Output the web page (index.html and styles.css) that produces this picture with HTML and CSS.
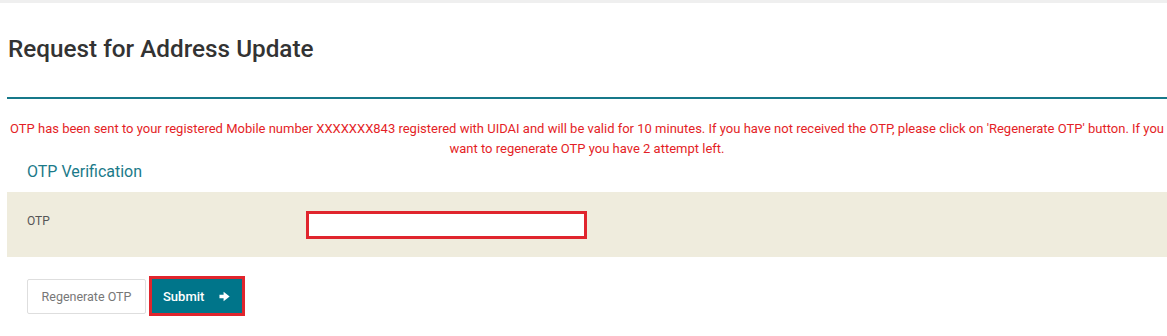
FILE: index.html
```html
<!DOCTYPE html>
<html lang="en">
<head>
    <meta charset="UTF-8">
    <meta name="viewport" content="width=device-width, initial-scale=1.0">
    <title>Request for Address Update</title>
    <link rel="stylesheet" href="styles.css">
</head>
<body>
    <div class="top-strip"></div>

    <div class="page">
        <div class="page-header">
            <h1>Request for Address Update</h1>
        </div>

        <p class="otp-message">OTP has been sent to your registered Mobile number XXXXXXX843 registered with UIDAI and will be valid for 10 minutes. If you have not received the OTP, please click on 'Regenerate OTP' button. If you want to regenerate OTP you have 2 attempt left.</p>

        <h2 class="section-title">OTP Verification</h2>

        <div class="form-row">
            <label for="otp">OTP</label>
            <input type="text" id="otp" class="otp-input">
        </div>

        <div class="actions">
            <button class="btn-regenerate">Regenerate OTP</button>
            <button class="btn-submit">Submit
                <svg class="arrow" viewBox="0 0 12 12" width="11" height="11">
                    <path d="M0.5 4.1 H5 V0.8 L11.6 6 L5 11.2 V7.9 H0.5 Z" fill="#fff"/>
                </svg>
            </button>
        </div>
    </div>
</body>
</html>
```

FILE: styles.css
```css
/* Body Style */
body {
    margin: 0;
    font-family: Roboto, Arial, sans-serif;
    color: #333;
    background-color: #fff;
}

.top-strip {
    height: 3px;
    background-color: #efefef;
}

.page {
    padding-left: 7px;
}

/* Header */
.page-header {
    padding: 30px 0 32px 1px;
    border-bottom: 2px solid #17798a;
}

.page-header h1 {
    margin: 0;
    font-size: 24.3px;
    line-height: 32px;
    font-weight: 500;
    color: #333;
}

.otp-message {
    margin: 20px 0 0;
    font-size: 13px;
    line-height: 20px;
    text-align: center;
    color: #e41e26;
}

.section-title {
    margin: 2px 0 0 20px;
    font-size: 16px;
    line-height: 22px;
    font-weight: 400;
    color: #1b7a89;
}

/* OTP row */
.form-row {
    display: flex;
    align-items: flex-start;
    height: 65px;
    margin-top: 9px;
    padding-left: 20px;
    background-color: #efecdd;
    box-sizing: border-box;
    padding-top: 19px;
}

.form-row label {
    width: 279px;
    padding-top: 3px;
    font-size: 12px;
    color: #555;
}

.otp-input {
    width: 281px;
    height: 28px;
    box-sizing: border-box;
    border: 3px solid #e0252d;
    background: #fff;
    outline: none;
}

/* Buttons */
.actions {
    display: flex;
    align-items: center;
    gap: 3px;
    padding: 19px 0 0 20px;
}

.btn-regenerate {
    width: 119px;
    height: 35px;
    background: #fff;
    border: 1px solid #dedede;
    border-radius: 2px;
    font-family: Roboto, Arial, sans-serif;
    font-size: 12.5px;
    color: #777;
    cursor: pointer;
}

.btn-submit {
    display: flex;
    align-items: center;
    gap: 15px;
    width: 96px;
    height: 40px;
    padding: 0 0 0 11px;
    background: #00758a;
    border: 3px solid #e0252d;
    font-family: Roboto, Arial, sans-serif;
    font-size: 13px;
    font-weight: 500;
    color: #fff;
    cursor: pointer;
}

.arrow {
    display: block;
}
```
